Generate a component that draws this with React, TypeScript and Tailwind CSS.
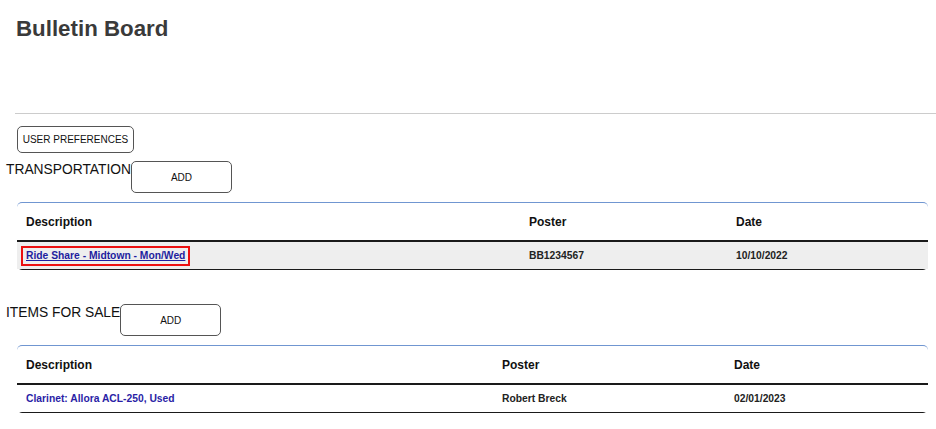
import React from "react";

type Row = { desc: string; poster: string; date: string };

const font = { fontFamily: '"Liberation Sans", Arial, sans-serif' };

function Board({
  rows,
  widths,
  highlight,
}: {
  rows: Row[];
  widths: [string, string, string];
  highlight?: boolean;
}) {
  return (
    <div className="ml-[17px] mr-[8px] rounded-[5px] border-t border-b border-t-[#7096d1] border-b-[#1a1a1a]">
      <table className="w-full table-fixed border-collapse">
        <colgroup>
          <col className={widths[0]} />
          <col className={widths[1]} />
          <col className={widths[2]} />
        </colgroup>
        <thead>
          <tr className="h-[38px] border-b-2 border-[#1a1a1a] text-left text-[12px] font-bold text-[#111]">
            <th className="pl-[9px] font-bold">Description</th>
            <th className="font-bold">Poster</th>
            <th className="font-bold">Date</th>
          </tr>
        </thead>
        <tbody>
          {rows.map((r) => (
            <tr
              key={r.desc}
              className={`h-[28px] text-[10.3px] font-bold text-[#222] ${highlight ? "bg-[#eeeeee]" : "bg-white"}`}
            >
              <td className="pl-[9px]">
                {highlight ? (
                  <span className="-ml-[5px] inline-block border-2 border-[#ec1010] px-[3px] leading-[16px]">
                    <a href="#" className="text-[#1e1e9e] underline">
                      {r.desc}
                    </a>
                  </span>
                ) : (
                  <a href="#" className="text-[#2a1ea6]">
                    {r.desc}
                  </a>
                )}
              </td>
              <td>{r.poster}</td>
              <td>{r.date}</td>
            </tr>
          ))}
        </tbody>
      </table>
    </div>
  );
}

function Section({ title, children }: { title: string; children: React.ReactNode }) {
  return (
    <div>
      <div className="flex items-start">
        <span className="ml-[6px] mt-[1px] text-[13.8px] leading-[16px] text-[#111]">{title}</span>
        <button className="h-[32px] w-[101px] rounded-[5px] border border-[#555] bg-white text-[10px] text-[#111]">
          ADD
        </button>
      </div>
      <div className="mt-[9px]">{children}</div>
    </div>
  );
}

export default function App() {
  return (
    <div className="min-h-[429px] w-[936px] bg-white" style={font}>
      <h1 className="pl-[16px] pt-[16px] text-[22.3px] font-bold leading-[26px] text-[#3a3a3a]">
        Bulletin Board
      </h1>
      <div className="ml-[15px] mt-[71px] h-px bg-[#cccccc]" />
      <div className="mt-[12px] pl-[17px]">
        <button className="h-[27px] w-[117px] rounded-[5px] border border-[#555] bg-white text-[10px] text-[#111]">
          USER PREFERENCES
        </button>
      </div>
      <div className="mt-[8px]">
        <Section title="TRANSPORTATION">
          <Board
            highlight
            widths={["w-[512px]", "w-[207px]", "w-auto"]}
            rows={[{ desc: "Ride Share - Midtown - Mon/Wed", poster: "BB1234567", date: "10/10/2022" }]}
          />
        </Section>
      </div>
      <div className="mt-[34px]">
        <Section title="ITEMS FOR SALE">
          <Board
            widths={["w-[485px]", "w-[232px]", "w-auto"]}
            rows={[{ desc: "Clarinet: Allora ACL-250, Used", poster: "Robert Breck", date: "02/01/2023" }]}
          />
        </Section>
      </div>
    </div>
  );
}
